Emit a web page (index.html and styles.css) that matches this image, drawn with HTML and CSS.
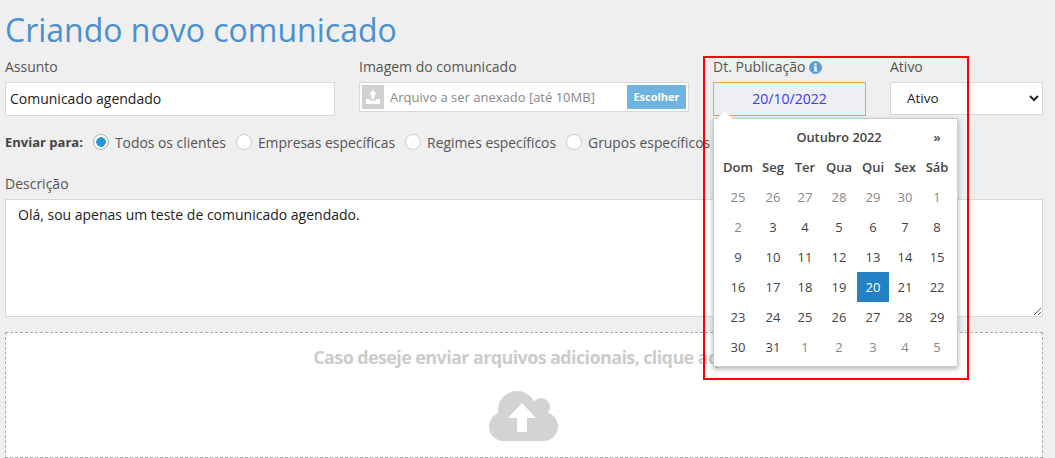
FILE: index.html
```html
<!DOCTYPE html>
<html lang="pt-BR">
  <head>
    <meta charset="utf-8">
    <title>Criando novo comunicado</title>
    <link rel="stylesheet" href="styles.css">
  </head>
  <body>
    <h1 class="title">Criando novo comunicado</h1>

    <div class="row">
      <div class="field wide">
        <label class="label">Assunto</label>
        <input class="input" type="text" value="Comunicado agendado">
      </div>
      <div class="field wide">
        <label class="label">Imagem do comunicado</label>
        <div class="file">
          <span class="file-icon">
            <svg width="14" height="14" viewBox="0 0 14 14"><path fill="#fff" d="M7 0l4 4.500H8.600V9H5.400V4.500H3zM0 9h4v1.500h6V9h4v5H0z"/></svg>
          </span>
          <span class="file-text">Arquivo a ser anexado [até 10MB]</span>
          <span class="file-button">Escolher</span>
        </div>
      </div>
      <div class="field narrow">
        <label class="label">Dt. Publicação
          <svg class="info" width="13" height="13" viewBox="0 0 13 13"><circle cx="6.500" cy="6.500" r="6.500" fill="#5b9bd0"/><rect x="5.400" y="2.300" width="2.200" height="2" fill="#fff"/><path fill="#fff" d="M4.800 5.300h2.800v4.100h.8v1.200H4.700V9.400h.8V6.500h-.7z"/></svg>
        </label>
        <input class="input date" type="text" value="20/10/2022">

        <div class="calendar">
          <span class="calendar-arrow"></span>
          <table class="days">
            <colgroup>
              <col class="col-first"><col class="col"><col class="col"><col class="col-mid"><col class="col"><col class="col"><col class="col">
            </colgroup>
            <tr class="month">
              <td></td>
              <td colspan="5">Outubro 2022</td>
              <td>»</td>
            </tr>
            <tr class="week">
              <th>Dom</th><th>Seg</th><th>Ter</th><th>Qua</th><th>Qui</th><th>Sex</th><th>Sáb</th>
            </tr>
            <tr>
              <td class="off">25</td><td class="off">26</td><td class="off">27</td><td class="off">28</td><td class="off">29</td><td class="off">30</td><td class="off">1</td>
            </tr>
            <tr>
              <td class="off">2</td><td>3</td><td>4</td><td>5</td><td>6</td><td>7</td><td>8</td>
            </tr>
            <tr>
              <td>9</td><td>10</td><td>11</td><td>12</td><td>13</td><td>14</td><td>15</td>
            </tr>
            <tr>
              <td>16</td><td>17</td><td>18</td><td>19</td><td class="selected">20</td><td>21</td><td>22</td>
            </tr>
            <tr>
              <td>23</td><td>24</td><td>25</td><td>26</td><td>27</td><td>28</td><td>29</td>
            </tr>
            <tr>
              <td>30</td><td>31</td><td class="off">1</td><td class="off">2</td><td class="off">3</td><td class="off">4</td><td class="off">5</td>
            </tr>
          </table>
        </div>
      </div>
      <div class="field narrow">
        <label class="label">Ativo</label>
        <select class="input select">
          <option>Ativo</option>
          <option>Inativo</option>
        </select>
      </div>
    </div>

    <div class="send">
      <b class="send-label">Enviar para:</b>
      <span class="option"><i class="radio on"></i>Todos os clientes</span>
      <span class="option"><i class="radio"></i>Empresas específicas</span>
      <span class="option"><i class="radio"></i>Regimes específicos</span>
      <span class="option"><i class="radio"></i>Grupos específicos</span>
    </div>

    <label class="label">Descrição</label>
    <textarea class="text">Olá, sou apenas um teste de comunicado agendado.</textarea>

    <div class="drop">
      <p class="drop-text">Caso deseje enviar arquivos adicionais, clique aqui</p>
      <svg width="70" height="50" viewBox="0 0 70 50">
        <circle cx="28" cy="19" r="19" fill="#d3d3d3"/>
        <circle cx="52" cy="16" r="9" fill="#d3d3d3"/>
        <rect x="0" y="21" width="69" height="29" rx="14.500" fill="#d3d3d3"/>
        <path fill="#fff" d="M33 12l14 15h-9v14H28V27h-9z"/>
      </svg>
    </div>

    <div class="mark"></div>
  </body>
</html>
```

FILE: styles.css
```css
html {
    overflow: hidden;
}

body {
    margin: 0;
    padding: 0 12px 0 5px;
    height: 458px;
    overflow: hidden;
    background-color: #efefef;
    font-family: "Open Sans", sans-serif;
    font-size: 14px;
    color: #444;
}

.title {
    margin: 0;
    padding-top: 9px;
    height: 48px;
    font-size: 32px;
    line-height: 42px;
    font-weight: 400;
    color: #4a90d0;
}

.row {
    display: flex;
    gap: 24px;
}

.field {
    position: relative;
}

.wide {
    width: 330px;
}

.narrow {
    width: 153px;
}

.label {
    display: block;
    height: 25px;
    line-height: 19px;
    font-size: 14px;
    color: #555;
}

.info {
    vertical-align: -2px;
}

.input {
    display: block;
    box-sizing: border-box;
    width: 100%;
    height: 34px;
    padding: 0 4px 2px;
    border: 1px solid #d8d8d8;
    background-color: #fff;
    font-family: "Open Sans", sans-serif;
    font-size: 14px;
    color: #222;
    outline: none;
}

.date {
    border-color: #f0a050;
    background-color: #eeeef5;
    color: #3a3af0;
    text-align: center;
}

.select {
    height: 33px;
    padding-left: 12px;
    font-size: 13.500px;
}

.file {
    display: flex;
    align-items: center;
    box-sizing: border-box;
    height: 30px;
    padding: 2px;
    border: 1px solid #d8d8d8;
    background-color: #fff;
}

.file-icon {
    display: flex;
    align-items: center;
    justify-content: center;
    width: 22px;
    height: 24px;
    background-color: #d0d0d0;
}

.file-text {
    flex: 1;
    margin-left: 6px;
    font-size: 13px;
    color: #888;
}

.file-button {
    width: 59px;
    height: 24px;
    line-height: 24px;
    text-align: center;
    background-color: #6fb3e0;
    font-size: 11px;
    font-weight: 700;
    color: #fff;
}

.calendar {
    position: absolute;
    left: 0;
    top: 61px;
    z-index: 2;
    box-sizing: border-box;
    width: 245px;
    height: 249px;
    padding: 3px 4px 0 5px;
    border: 1px solid #ccc;
    background-color: #fff;
    box-shadow: 0 2px 5px rgba(0, 0, 0, .3);
}

.calendar-arrow {
    position: absolute;
    left: 6px;
    top: -6px;
    width: 10px;
    height: 10px;
    background-color: #fff;
    transform: rotate(45deg);
}

.days {
    border-collapse: collapse;
    table-layout: fixed;
    width: 234px;
    font-size: 13px;
    color: #444;
}

.col-first {
    width: 38px;
}

.col {
    width: 32px;
}

.col-mid {
    width: 36px;
}

.days td, .days th {
    height: 30px;
    padding: 0;
    text-align: center;
}

.days th {
    font-weight: 600;
}

.month td {
    font-size: 12.800px;
    font-weight: 600;
}

.days .off {
    color: #888;
}

.days .selected {
    background-color: #2282c4;
    color: #fff;
}

.send {
    display: flex;
    align-items: center;
    gap: 10px;
    height: 24px;
    margin-top: 14px;
    font-size: 13.900px;
    color: #555;
}

.send-label {
    font-weight: 700;
    font-size: 13px;
    color: #444;
}

.option {
    display: flex;
    align-items: center;
    gap: 6px;
}

.radio {
    display: block;
    box-sizing: border-box;
    width: 16px;
    height: 16px;
    border: 1px solid #ccc;
    border-radius: 50%;
    background-color: #fff;
}

.radio.on {
    border-color: #9bb;
    background: radial-gradient(circle, #2a94d6 0, #2a94d6 4.500px, #fff 5px);
}

.send + .label {
    margin-top: 20px;
}

.text {
    display: block;
    box-sizing: border-box;
    width: 1038px;
    height: 118px;
    padding: 5px 12px;
    border: 1px solid #d8d8d8;
    background-color: #fff;
    font-family: "Open Sans", sans-serif;
    font-size: 14px;
    line-height: 20px;
    color: #222;
    outline: none;
}

.drop {
    box-sizing: border-box;
    width: 1038px;
    height: 126px;
    margin-top: 15px;
    border: 1px dashed #aaa;
    background-color: #fff;
    text-align: center;
}

.drop-text {
    margin: 12px 0 22px;
    font-size: 18px;
    line-height: 24px;
    font-weight: 700;
    letter-spacing: -.62px;
    color: #ccc;
}

.mark {
    position: absolute;
    left: 703px;
    top: 56px;
    box-sizing: border-box;
    width: 266px;
    height: 324px;
    border: 2px solid #f00;
    z-index: 3;
}
```
